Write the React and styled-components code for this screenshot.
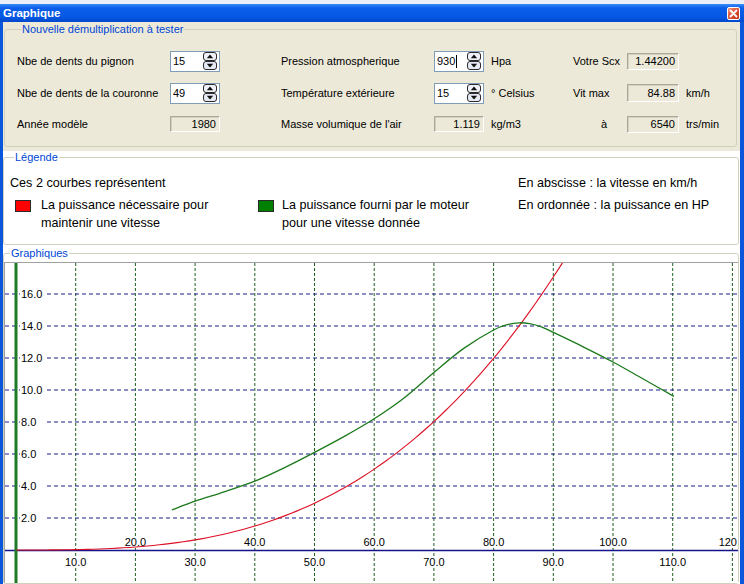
import React from 'react';
import styled, { createGlobalStyle } from 'styled-components';

const GlobalStyle = createGlobalStyle`
  html, body {
    margin: 0;
    padding: 0;
    background: #fff;
  }
  body {
    font-family: "Liberation Sans", Arial, sans-serif;
  }
`;

const Window = styled.div`
  width: 744px;
  height: 584px;
  overflow: hidden;
  display: flex;
  flex-direction: column;
  background: #0b57dc;
`;

const TopStrip = styled.div`
  height: 4px;
  background: #e9eef8;
`;

const TitleBar = styled.div`
  height: 18px;
  display: flex;
  align-items: center;
  justify-content: space-between;
  padding: 0 4px 0 3px;
  background: linear-gradient(#3a8cf8 0%, #0a5ee8 22%, #0458e4 70%, #0049cc 100%);
  color: #fff;
  font-weight: bold;
  font-size: 11.5px;
`;

const CloseButton = styled.div`
  width: 13px;
  height: 13px;
  box-sizing: border-box;
  border: 1px solid #fff;
  border-radius: 2px;
  background: linear-gradient(135deg, #f29478, #dc4a2e 55%, #c0321c);
  display: flex;
  align-items: center;
  justify-content: center;
`;

const Body = styled.div`
  flex: 1;
  margin: 0 4px 0 3px;
  background: #ece9d8;
  display: flex;
  flex-direction: column;
  overflow: hidden;
`;

const TopSection = styled.div`
  padding: 1px 3px 4px 1px;
`;

const Group = styled.fieldset`
  margin: ${p => p.$margin || '0'};
  min-width: 0;
  border: 1px solid #d0d0bf;
  border-radius: 3px;
  padding: ${p => p.$pad || '0'};
`;

const Caption = styled.legend`
  font-size: 11px;
  line-height: 13px;
  color: #0046d5;
  padding: 0 1px;
  margin-left: ${p => p.$indent || 4}px;
`;

const SettingsGrid = styled.div`
  display: grid;
  grid-template-columns: 153px 50px 61px 153px 50px 89px 54px 52px 1fr;
  grid-template-rows: 32px 32px 30px;
  align-items: center;
  font-size: 11px;
  color: #000;
`;

const Label = styled.span`
  grid-column: ${p => p.$col || 'auto'};
  padding-left: ${p => p.$indent || 0}px;
  white-space: nowrap;
`;

const Unit = styled.span`
  padding-left: 7px;
  white-space: nowrap;
`;

const SpinBox = styled.div`
  height: 21px;
  box-sizing: border-box;
  border: 1px solid #7f9db9;
  background: #fff;
  display: flex;
  align-items: center;
  justify-content: space-between;
  padding: 0 2px 0 2px;
`;

const SpinValue = styled.span`
  display: flex;
  align-items: center;
`;

const Caret = styled.span`
  width: 1px;
  height: 13px;
  background: #000;
  margin-left: 1px;
`;

const ReadOnlyBox = styled.div`
  height: ${p => p.$h || 16}px;
  box-sizing: border-box;
  border: 1px solid;
  border-color: #aca899 #fff #fff #aca899;
  box-shadow: inset 1px 1px 0 #d4d0c0;
  background: #ece9d8;
  display: flex;
  align-items: center;
  justify-content: flex-end;
  padding-right: 3px;
`;

const LowerSection = styled.div`
  flex: 1;
  background: #fff;
  display: flex;
  flex-direction: column;
  padding-right: 1px;
`;

const LegendGrid = styled.div`
  display: grid;
  grid-template-columns: 248px 260px 1fr;
  row-gap: 4px;
  font-size: 12.6px;
  line-height: 18px;
  color: #000;
`;

const Wide = styled.div`
  grid-column: 1 / span 2;
`;

const LegendItem = styled.div`
  display: flex;
  align-items: flex-start;
`;

const Swatch = styled.span`
  flex: none;
  width: 16px;
  height: 12px;
  box-sizing: border-box;
  border: 1px solid #2a2a2a;
  background: ${p => p.$color};
  margin: 4px ${p => p.$gap}px 0 ${p => p.$inset}px;
`;

const Chart = styled.div`
  height: 320px;
  margin-top: 2px;
  border-top: 1px solid #a0a0a0;
  border-left: 1px solid #a0a0a0;
  background: #fff;
  overflow: hidden;
`;

const SpinIcon = () => (
  <svg width="14" height="18" viewBox="0 0 14 18">
    <rect x="0.5" y="0.5" width="13" height="8" rx="2.5" fill="#eef1f8" stroke="#2b2b2b" />
    <rect x="0.5" y="9.5" width="13" height="8" rx="2.5" fill="#e6eaf4" stroke="#2b2b2b" />
    <path d="M7 2.5 L10.2 6.3 H3.8 Z" fill="#111" />
    <path d="M7 15.5 L10.2 11.7 H3.8 Z" fill="#111" />
  </svg>
);

const CloseIcon = () => (
  <svg width="9" height="9" viewBox="0 0 9 9">
    <path d="M1.5 1.5 L7.5 7.5 M7.5 1.5 L1.5 7.5" stroke="#fff" strokeWidth="1.8" strokeLinecap="round" />
  </svg>
);

const Spin = ({ value, caret }) => (
  <SpinBox>
    <SpinValue>{value}{caret && <Caret />}</SpinValue>
    <SpinIcon />
  </SpinBox>
);

// chart scale (page coordinates)
const X0 = 16;
const Y0 = 550;
const PX_PER_KMH = 5.97;
const PX_PER_HP = 16;
const px = v => X0 + v * PX_PER_KMH;
const py = p => Y0 - p * PX_PER_HP;

const smoothPath = pts => pts.reduce((d, p, i, a) => {
  if (i === 0) return `M${p[0]},${p[1]}`;
  const p0 = a[i - 2] || a[i - 1];
  const p1 = a[i - 1];
  const p3 = a[i + 1] || p;
  const c1 = [p1[0] + (p[0] - p0[0]) / 6, p1[1] + (p[1] - p0[1]) / 6];
  const c2 = [p[0] - (p3[0] - p1[0]) / 6, p[1] - (p3[1] - p1[1]) / 6];
  return `${d} C${c1} ${c2} ${p}`;
}, '');

const redPoints = [];
for (let v = 0; v <= 92; v += 1) {
  redPoints.push([px(v), py(2.34e-5 * v * v * v)]);
}

const greenData = [
  [26.1, 2.5], [30, 3.05], [35, 3.65], [40, 4.3], [45, 5.15], [50, 6.1],
  [55, 7.1], [60, 8.2], [65, 9.5], [70, 11.1], [75, 12.6], [80, 13.75],
  [82.5, 14.1], [84.3, 14.2], [86, 14.15], [88, 13.95], [90, 13.6],
  [95, 12.7], [100, 11.75], [105, 10.7], [110.2, 9.6],
];
const greenPoints = greenData.map(([v, p]) => [px(v), py(p)]);

const hLines = [2, 4, 6, 8, 10, 12, 14, 16];
const vLines = [10, 20, 30, 40, 50, 60, 70, 80, 90, 100, 110, 120];

const PowerChart = () => (
  <svg width="734" height="320" viewBox="5 263 734 320" fontFamily="Liberation Sans, Arial, sans-serif" fontSize="11">
    {vLines.map(v => (
      <line key={`v${v}`} x1={px(v)} y1="263" x2={px(v)} y2="583" stroke="#1f5f1f" strokeDasharray="3 2" />
    ))}
    {hLines.map(p => (
      <line key={`h${p}`} x1="5" y1={py(p)} x2="739" y2={py(p)} stroke="#1c1c8c" strokeDasharray="4 3" />
    ))}
    <line x1="5" y1={Y0 + 0.5} x2="739" y2={Y0 + 0.5} stroke="#14148c" strokeWidth="1.4" />
    <line x1={X0} y1="263" x2={X0} y2="583" stroke="#1f7a26" strokeWidth="3" />
    {hLines.map(p => (
      <g key={`hl${p}`}>
        <rect x="20" y={py(p) - 6} width="25" height="12" fill="#fff" />
        <text x="21" y={py(p) + 4} fill="#000">{p.toFixed(1)}</text>
      </g>
    ))}
    {vLines.map(v => {
      const base = v % 20 === 0 ? 546 : 566;
      const label = v.toFixed(1);
      const w = label.length * 6.1;
      return (
        <g key={`vl${v}`}>
          <rect x={px(v) - w / 2 - 1} y={base - 9} width={w + 2} height="11" fill="#fff" />
          <text x={px(v)} y={base} textAnchor="middle" fill="#000">{label}</text>
        </g>
      );
    })}
    <path d={smoothPath(redPoints)} fill="none" stroke="#dc0f24" strokeWidth="1.1" />
    <path d={smoothPath(greenPoints)} fill="none" stroke="#1b7a1b" strokeWidth="1.3" />
  </svg>
);

export default function App() {
  return (
    <>
      <GlobalStyle />
      <Window>
        <TopStrip />
        <TitleBar>
          <span>Graphique</span>
          <CloseButton><CloseIcon /></CloseButton>
        </TitleBar>
        <Body>
          <TopSection>
            <Group $pad="9px 0 7px 12px">
              <Caption>Nouvelle démultiplication à tester</Caption>
              <SettingsGrid>
                <Label>Nbe de dents du pignon</Label>
                <Spin value="15" />
                <Label $col={4}>Pression atmospherique</Label>
                <Spin value="930" caret />
                <Unit>Hpa</Unit>
                <Label>Votre Scx</Label>
                <ReadOnlyBox $h={17}>1.44200</ReadOnlyBox>
                <span />

                <Label>Nbe de dents de la couronne</Label>
                <Spin value="49" />
                <Label $col={4}>Température extérieure</Label>
                <Spin value="15" />
                <Unit>° Celsius</Unit>
                <Label>Vit max</Label>
                <ReadOnlyBox $h={18}>84.88</ReadOnlyBox>
                <Unit>km/h</Unit>

                <Label>Année modèle</Label>
                <ReadOnlyBox>1980</ReadOnlyBox>
                <Label $col={4}>Masse volumique de l'air</Label>
                <ReadOnlyBox>1.119</ReadOnlyBox>
                <Unit>kg/m3</Unit>
                <Label $indent={28}>à</Label>
                <ReadOnlyBox $h={17}>6540</ReadOnlyBox>
                <Unit>trs/min</Unit>
              </SettingsGrid>
            </Group>
          </TopSection>
          <LowerSection>
            <Group $pad="10px 6px 12px 6px">
              <Caption $indent={0}>Légende</Caption>
              <LegendGrid>
                <Wide>Ces 2 courbes représentent</Wide>
                <div>En abscisse : la vitesse en km/h</div>
                <LegendItem>
                  <Swatch $color="#ff0000" $inset={5} $gap={10} />
                  <span>La puissance nécessaire pour<br />maintenir une vitesse</span>
                </LegendItem>
                <LegendItem>
                  <Swatch $color="#008000" $inset={0} $gap={8} />
                  <span>La puissance fourni par le moteur<br />pour une vitesse donnée</span>
                </LegendItem>
                <div>En ordonnée : la puissance en HP</div>
              </LegendGrid>
            </Group>
            <Group $margin="2px 0 0 0">
              <Caption $indent={6}>Graphiques</Caption>
              <Chart>
                <PowerChart />
              </Chart>
            </Group>
          </LowerSection>
        </Body>
      </Window>
    </>
  );
}
